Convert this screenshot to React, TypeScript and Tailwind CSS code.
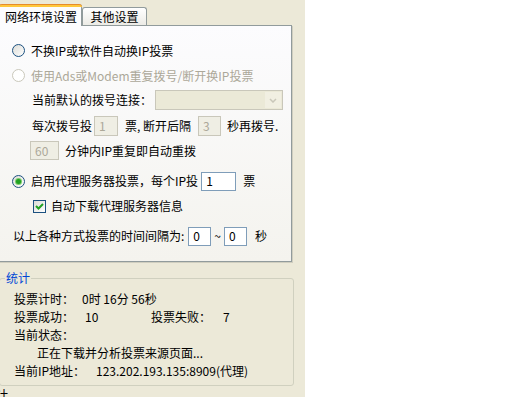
import React from 'react';

const Radio: React.FC<{ checked?: boolean; disabled?: boolean }> = ({ checked, disabled }) => (
  <span
    className={`flex items-center justify-center w-[13px] h-[13px] rounded-full border shrink-0 ${
      disabled
        ? 'border-[#CAC8BB] bg-white'
        : 'border-[#1C5180] bg-gradient-to-br from-[#DCDCD7] to-white'
    }`}
  >
    {checked && <span className="w-[5px] h-[5px] rounded-full bg-[#21A121] shadow-[0_0_0_1px_#7BCB6C]" />}
  </span>
);

const Checkbox: React.FC = () => (
  <span className="flex items-center justify-center w-[13px] h-[13px] border border-[#1C5180] bg-gradient-to-br from-[#DCDCD7] to-white shrink-0">
    <svg width="9" height="9" viewBox="0 0 9 9">
      <path d="M1 4 L3.5 6.5 L8 2" fill="none" stroke="#21A121" strokeWidth="2" />
    </svg>
  </span>
);

const Box: React.FC<{ value: string; w: string; disabled?: boolean; h?: string }> = ({ value, w, disabled, h = 'h-[19px]' }) => (
  <span
    className={`flex items-center pl-[4px] border shrink-0 ${w} ${h} ${
      disabled ? 'border-[#C9C7BA] bg-[#EFEEE4] text-[#ACA899]' : 'border-[#7F9DB9] bg-white text-black'
    }`}
  >
    {value}
  </span>
);

const App: React.FC = () => {
  return (
    <div className="w-[512px] h-[397px] overflow-hidden flex bg-white text-[12px] leading-none text-black font-['Noto_Sans_CJK_SC',sans-serif]">
      <div className="w-[305px] h-full bg-[#ECE9D8] flex flex-col overflow-hidden">
        {/* Tabs */}
        <div className="flex items-end h-[25px] shrink-0 relative z-10">
          <div className="-ml-px w-[83px] h-[22px] -mb-px bg-[#FCFCFE] border-x border-[#919B9C] rounded-t-[3px] flex flex-col">
            <div className="h-[3px] border-t border-[#E68B2C] bg-[#FFC83C] rounded-t-[3px] -mx-px" />
            <div className="flex-1 flex items-center pl-[5px]">网络环境设置</div>
          </div>
          <div className="w-[65px] h-[18px] border border-b-0 border-[#919B9C] rounded-t-[3px] bg-gradient-to-b from-white to-[#ECEBE6] flex items-center justify-center">
            其他设置
          </div>
        </div>

        {/* Tab panel */}
        <div className="-ml-px w-[293px] h-[237px] shrink-0 border border-[#919B9C] bg-gradient-to-b from-[#FCFCFE] to-[#F4F3EE] shadow-[1px_1px_0_#D0CEBF] flex flex-col pt-[12px]">
          <div className="h-[25px] shrink-0 flex items-center gap-[6px] pl-[12px]">
            <Radio />
            <span>不换IP或软件自动换IP投票</span>
          </div>
          <div className="h-[25px] shrink-0 flex items-center gap-[6px] pl-[12px] text-[#ACA899]">
            <Radio disabled />
            <span>使用Ads或Modem重复拨号/断开换IP投票</span>
          </div>
          <div className="h-[24px] shrink-0 flex items-center pl-[32px]">
            <span>当前默认的拨号连接：</span>
            <span className="ml-[3px] w-[128px] h-[20px] border border-[#C9C7BA] bg-[#EBE9D7] flex justify-end p-px">
              <span className="w-[16px] h-full bg-[#F1EFE2] flex items-center justify-center">
                <svg width="8" height="5" viewBox="0 0 8 5">
                  <path d="M1 1 L4 4 L7 1" fill="none" stroke="#C9C7BA" strokeWidth="1.5" />
                </svg>
              </span>
            </span>
          </div>
          <div className="h-[27px] shrink-0 flex items-center pl-[32px] text-black">
            <span>每次拨号投</span>
            <Box value="1" w="w-[24px] ml-[2px]" h="h-[20px]" disabled />
            <span className="ml-[7px]">票, 断开后隔</span>
            <Box value="3" w="w-[23px] ml-[7px]" h="h-[20px]" disabled />
            <span className="ml-[6px]">秒再拨号.</span>
          </div>
          <div className="h-[23px] shrink-0 flex items-center pl-[30px]">
            <Box value="60" w="w-[29px]" disabled />
            <span className="ml-[6px]">分钟内IP重复即自动重拨</span>
          </div>
          <div className="mt-[6px] h-[26px] shrink-0 flex items-center gap-[6px] pl-[12px]">
            <Radio checked />
            <span>启用代理服务器投票，每个IP投</span>
            <Box value="1" w="w-[35px] -ml-[3px]" />
            <span className="ml-[1px]">票</span>
          </div>
          <div className="h-[24px] shrink-0 flex items-center gap-[5px] pl-[33px]">
            <Checkbox />
            <span>自动下载代理服务器信息</span>
          </div>
          <div className="mt-[6px] h-[24px] shrink-0 flex items-center pl-[13px]">
            <span>以上各种方式投票的时间间隔为:</span>
            <Box value="0" w="w-[23px] ml-[4px]" />
            <span className="mx-[3px]">~</span>
            <Box value="0" w="w-[23px]" />
            <span className="ml-[8px]">秒</span>
          </div>
        </div>

        {/* Stats group */}
        <fieldset className="-ml-px mt-[10px] shrink-0 w-[295px] border border-[#D0D0BF] rounded-[3px] pt-[6px] pb-[5px]">
          <legend className="ml-[5px] px-px text-[#0046D5]">统计</legend>
          <div className="h-[18px] flex items-center pl-[14px]">
            <span className="w-[68px]">投票计时：</span>
            <span>0时 16分 56秒</span>
          </div>
          <div className="h-[18px] flex items-center pl-[14px]">
            <span className="w-[71px]">投票成功：</span>
            <span className="w-[66px]">10</span>
            <span className="w-[72px]">投票失败：</span>
            <span>7</span>
          </div>
          <div className="h-[18px] flex items-center pl-[14px]">当前状态：</div>
          <div className="h-[18px] flex items-center pl-[37px]">正在下载并分析投票来源页面...</div>
          <div className="h-[18px] flex items-center pl-[14px]">
            <span className="w-[82px]">当前IP地址：</span>
            <span>123.202.193.135:8909(代理)</span>
          </div>
        </fieldset>
        <div className="mt-[3px] -ml-[4px] shrink-0">计</div>
      </div>
      <div className="flex-1 bg-white" />
    </div>
  );
};

export default App;
